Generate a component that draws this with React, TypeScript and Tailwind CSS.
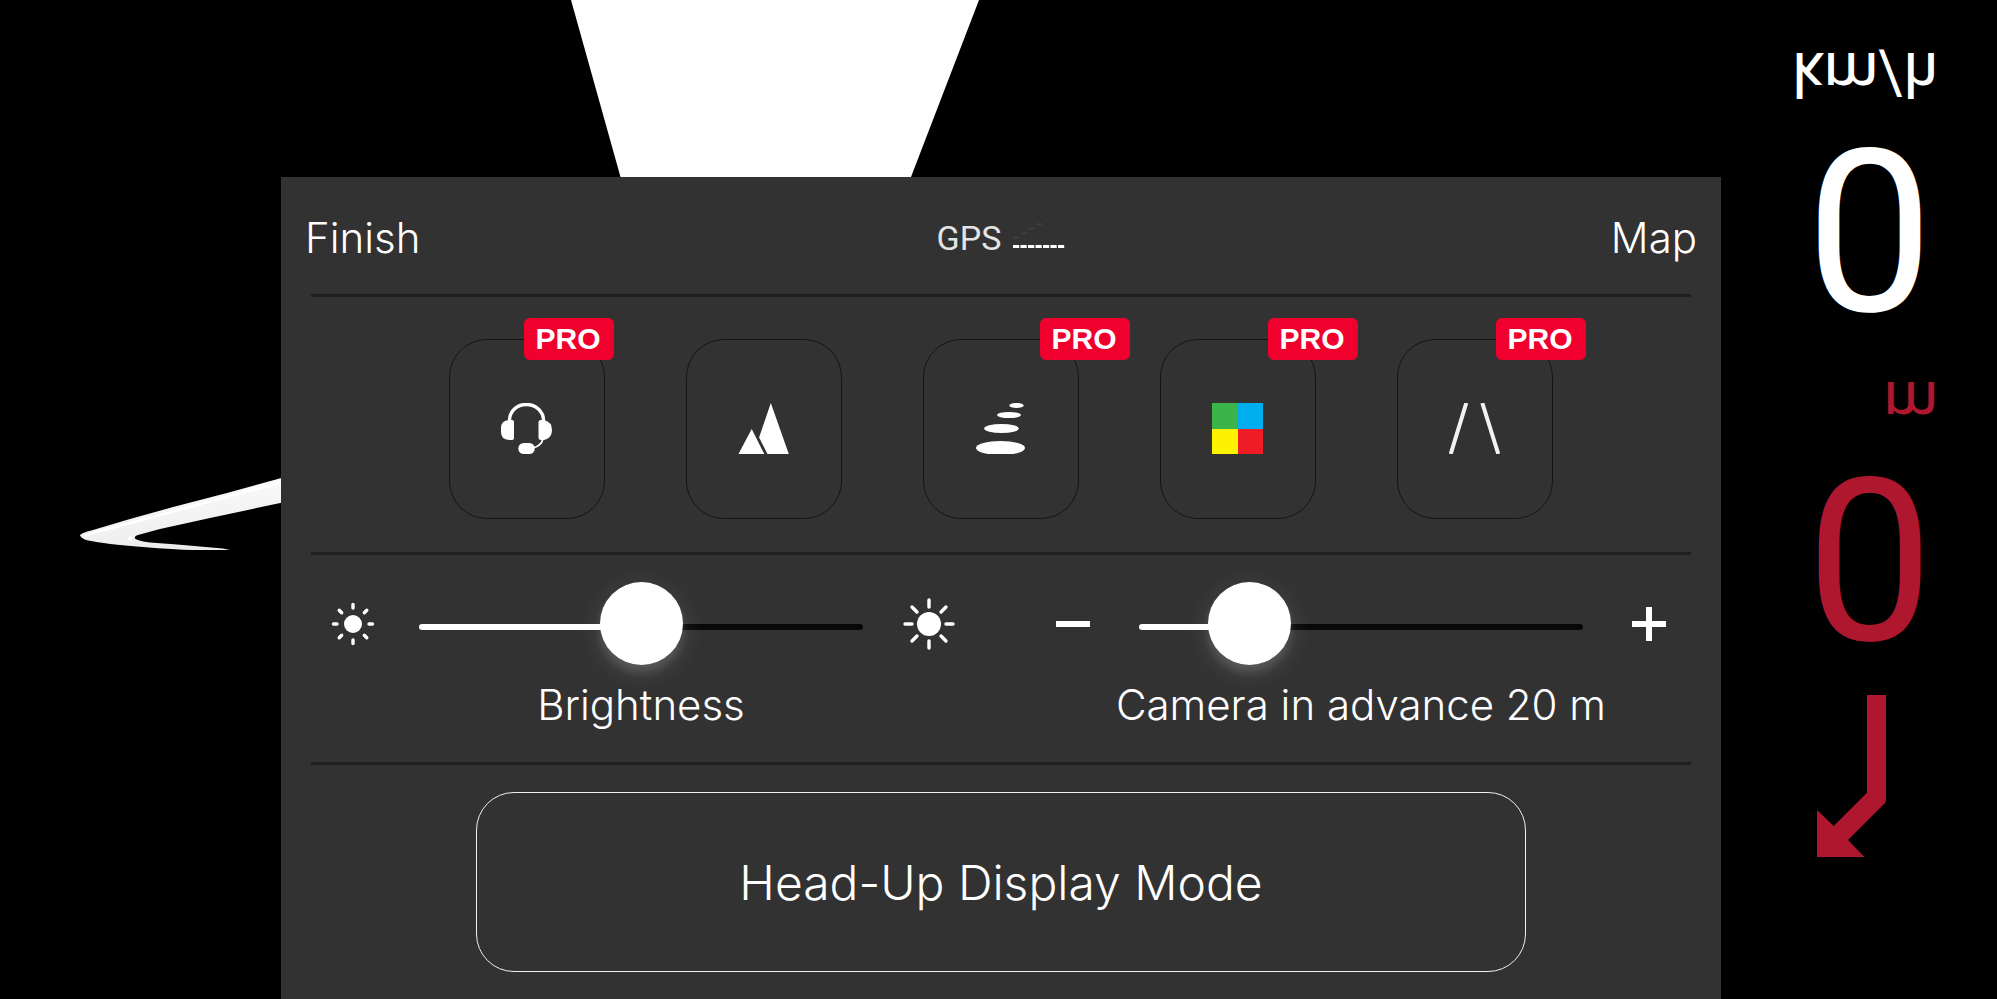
import { useState } from "react";
import type { CSSProperties, ReactNode } from "react";

type Mode = { label: string; badge?: string; icon: ReactNode };

function HeadsetIcon() {
  return (
    <svg viewBox="0 0 51 51" className="size-[51px]" aria-hidden="true">
      <path d="M8.500 19v-1.500C8.500 8 16 1.500 25.300 1.500S42.500 8 42.500 17.500V19" fill="none" stroke="#fff" strokeWidth="3.400" />
      <path d="M8 17h3q2 0 2 2v16q0 2-2 2H8Q0 36.500 0 29v-4Q0 17.500 8 17z" fill="#fff" />
      <path d="M43 17h-3q-2.500 0-2.500 2v16q0 2 2.500 2h3Q51 35 51 27T43 17z" fill="#fff" />
      <path d="M42 36q-2 7-10 9" fill="none" stroke="#fff" strokeWidth="1.800" />
      <rect x="17.300" y="40" width="16.500" height="11" rx="5.500" fill="#fff" />
    </svg>
  );
}

function MountainsIcon() {
  return (
    <svg viewBox="0 0 51 51" className="size-[51px]" aria-hidden="true">
      <path d="M0.500 51 13.700 26 26.300 51zM32.800 0 50.800 51H29.500L21.100 34.500z" fill="#fff" />
    </svg>
  );
}

function StonesIcon() {
  return (
    <svg viewBox="0 0 51 51" className="size-[51px]" aria-hidden="true">
      <g fill="#fff">
        <ellipse cx="41.500" cy="2.500" rx="7.200" ry="2.600" />
        <ellipse cx="34" cy="12" rx="12" ry="3.100" />
        <ellipse cx="26.500" cy="25.500" rx="17.300" ry="4.600" />
        <ellipse cx="25.500" cy="45" rx="24.500" ry="7" />
      </g>
    </svg>
  );
}

function ColorsIcon() {
  return (
    <svg viewBox="0 0 51 51" className="size-[51px]" shapeRendering="crispEdges" aria-hidden="true">
      <path d="M0 0h26v26H0z" fill="#3bb54a" />
      <path d="M26 0h25v26H26z" fill="#00adef" />
      <path d="M0 26h26v25H0z" fill="#fff200" />
      <path d="M26 26h25v25H26z" fill="#ee1c24" />
    </svg>
  );
}

function RoadIcon() {
  return (
    <svg viewBox="0 0 51 51" className="size-[51px]" aria-hidden="true">
      <path d="M17.300 0 1.700 51M33.300 0 49.300 51" stroke="#f2f2f2" strokeWidth="4" />
    </svg>
  );
}

function SunIcon({ core, from, to, className }: { core: number; from: number; to: number; className: string }) {
  return (
    <svg viewBox="-26 -26 52 52" className={className} aria-hidden="true">
      <circle r={core} fill="#fff" />
      {[0, 45, 90, 135, 180, 225, 270, 315].map((angle) => (
        <path key={angle} d={`M0 ${from}V${to}`} transform={`rotate(${angle})`} stroke="#fff" strokeWidth="3.400" strokeLinecap="round" />
      ))}
    </svg>
  );
}

const modes: Mode[] = [
  { label: "Voice", badge: "left-[74px]", icon: <HeadsetIcon /> },
  { label: "Terrain", icon: <MountainsIcon /> },
  { label: "Trail", badge: "left-[116px]", icon: <StonesIcon /> },
  { label: "Colors", badge: "left-[107px]", icon: <ColorsIcon /> },
  { label: "Lanes", badge: "left-[98px]", icon: <RoadIcon /> },
];

function Slider({ id, label, max, value, onChange, before, after }: {
  id: string;
  label: string;
  max: number;
  value: number;
  onChange: (value: number) => void;
  before: ReactNode;
  after: ReactNode;
}) {
  const fill = { "--fill": `${(value / max) * 100}%` } as CSSProperties;
  return (
    <div className="flex min-w-0 flex-1 flex-col items-center px-[47px]">
      <div className="flex w-full items-center gap-[41px]">
        {before}
        <input
          id={id}
          type="range"
          min={0}
          max={max}
          value={value}
          onChange={(event) => onChange(Number(event.target.value))}
          style={fill}
          className="mt-1.5 h-[84px] min-w-0 flex-1 cursor-pointer appearance-none bg-transparent [&::-webkit-slider-runnable-track]:h-1.5 [&::-webkit-slider-runnable-track]:rounded-full [&::-webkit-slider-runnable-track]:bg-[linear-gradient(to_right,#fff_var(--fill),#080808_var(--fill))] [&::-webkit-slider-thumb]:-mt-[42px] [&::-webkit-slider-thumb]:size-[83px] [&::-webkit-slider-thumb]:appearance-none [&::-webkit-slider-thumb]:rounded-full [&::-webkit-slider-thumb]:bg-white [&::-webkit-slider-thumb]:shadow-[0_8px_8px_rgba(255,255,255,0.12),0_6px_28px_rgba(255,255,255,0.12)]"
        />
        {after}
      </div>
      <label htmlFor={id} className="mt-2 text-[42px] leading-[56px] whitespace-nowrap">
        {label}
      </label>
    </div>
  );
}

function Scenery() {
  return (
    <svg viewBox="0 0 1997 999" preserveAspectRatio="xMinYMin slice" className="absolute inset-0 size-full" aria-hidden="true">
      <defs>
        <linearGradient id="blade" x1="0" y1="0" x2="0.280" y2="1">
          <stop offset="0" stopColor="#fff" />
          <stop offset="1" stopColor="#ececec" />
        </linearGradient>
      </defs>
      <path d="M571 0H979L911 177V190H624L620.500 177z" fill="#fefefe" />
      <path
        d="M285 477 227 493 175 506.500 130 519 93 530Q80 533 80 535.500 82 539 88 540.500 105 544 143 547 175 549.500 193 550H230L223 548.500 177 544.500 150 542.500Q138 541 135 538.500 134 536 138 535L160 529 210 518 285 502z"
        fill="url(#blade)"
      />
      <path d="M285 481 175 511 93 533Q84 535 86 537.500" fill="none" stroke="#fff" strokeWidth="2.500" />
      <path d="M131 536.500 129 540" stroke="#fff" strokeWidth="4" />
    </svg>
  );
}

function SignalBars() {
  return (
    <svg viewBox="0 0 52 36" className="h-9 w-[52px]" aria-hidden="true">
      {[0, 1, 2, 3, 4, 5, 6].map((i) => (
        <rect key={i} x={i * 7.5} y="25" width="6.200" height="3" fill="#fff" />
      ))}
      {[0, 1, 2, 3, 4, 5].map((i) => (
        <rect key={i} x={i * 7.5 + 0.5} y={17 - i * 4.5} width="6" height="1.500" fill="#424242" />
      ))}
    </svg>
  );
}

function Readouts() {
  return (
    <aside className="flex w-[276px] shrink-0 flex-col items-end pt-[43px] pr-[59px] font-[Roboto,sans-serif] text-white">
      <div className="-scale-y-100 text-[62px] leading-none">km/h</div>
      <div className="mt-2 w-[137px] -scale-y-100 text-center text-[226px] leading-none">0</div>
      <div className="mt-[33px] -scale-y-100 text-[62px] leading-none text-[#af172e]">m</div>
      <div className="mt-2 w-[137px] -scale-y-100 text-center text-[226px] leading-none text-[#af172e]">0</div>
      <svg viewBox="0 0 69 162" className="mt-[27px] mr-[52px] h-[162px] w-[69px]" aria-hidden="true">
        <path d="M50 0H69V105Q69 107 67.500 108.500L31 145 47.300 162H0V115L16.700 131 50 97.700z" fill="#af172e" />
      </svg>
    </aside>
  );
}

export default function App() {
  const [brightness, setBrightness] = useState(50);
  const [distance, setDistance] = useState(20);

  return (
    <div className="relative flex min-h-screen justify-end overflow-hidden bg-black">
      <Scenery />
      <main className="relative mt-[177px] ml-[281px] min-w-0 flex-1 bg-[#323232] font-[Inter,sans-serif] font-light text-white">
        <header className="grid h-[117px] grid-cols-[1fr_auto_1fr] items-center px-6 pt-1">
          <button type="button" className="justify-self-start text-[42px] leading-[56px]">Finish</button>
          <div className="flex items-center gap-3">
            <span className="font-[Roboto,sans-serif] text-[34px] leading-10 font-normal text-[#e4e4e4]">GPS</span>
            <SignalBars />
          </div>
          <button type="button" className="justify-self-end text-[42px] leading-[56px]">Map</button>
        </header>

        <section className="mx-[30px] flex h-[261px] justify-center gap-[81px] border-y-3 border-[#1f1f1f] pt-[42px]">
          {modes.map((mode) => (
            <button
              key={mode.label}
              type="button"
              aria-label={mode.label}
              className="relative flex h-[180px] w-[156px] items-center justify-center rounded-[38px] border border-[#141414] pr-px pb-px"
            >
              {mode.icon}
              {mode.badge && (
                <span className={`absolute -top-[22px] flex h-[42px] w-[90px] items-center justify-center rounded-md bg-[#f0002d] pr-0.5 font-['Liberation_Sans',sans-serif] text-[30px] leading-none font-bold ${mode.badge}`}>
                  PRO
                </span>
              )}
            </button>
          ))}
        </section>

        <section className="flex h-[207px] pt-6">
          <Slider
            id="brightness"
            label="Brightness"
            max={100}
            value={brightness}
            onChange={setBrightness}
            before={<span className="flex w-[50px] shrink-0 justify-center"><SunIcon core={9} from={16} to={19.5} className="size-[52px] shrink-0" /></span>}
            after={<span className="flex w-[50px] shrink-0 justify-center"><SunIcon core={12} from={17} to={24} className="size-[52px] shrink-0" /></span>}
          />
          <Slider
            id="camera"
            label={`Camera in advance ${distance} m`}
            max={104}
            value={distance}
            onChange={setDistance}
            before={
              <button type="button" aria-label="Closer" onClick={() => setDistance((d) => Math.max(0, d - 1))} className="flex h-[52px] w-[50px] shrink-0 items-center justify-center">
                <svg viewBox="0 0 34 34" className="size-[34px]" aria-hidden="true"><path d="M0 17H34" stroke="#fff" strokeWidth="6" /></svg>
              </button>
            }
            after={
              <button type="button" aria-label="Farther" onClick={() => setDistance((d) => Math.min(104, d + 1))} className="flex h-[52px] w-[50px] shrink-0 items-center justify-center">
                <svg viewBox="0 0 34 34" className="size-[34px]" aria-hidden="true"><path d="M0 17H34M17 0V34" stroke="#fff" strokeWidth="6" /></svg>
              </button>
            }
          />
        </section>

        <section className="mx-[30px] flex justify-center border-t-3 border-[#1f1f1f] py-[27px]">
          <button type="button" className="h-[180px] w-full max-w-[1050px] rounded-[38px] border border-[#f0f0f0] pt-0.5 text-[48px] leading-[60px]">
            Head-Up Display Mode
          </button>
        </section>
      </main>
      <Readouts />
    </div>
  );
}
